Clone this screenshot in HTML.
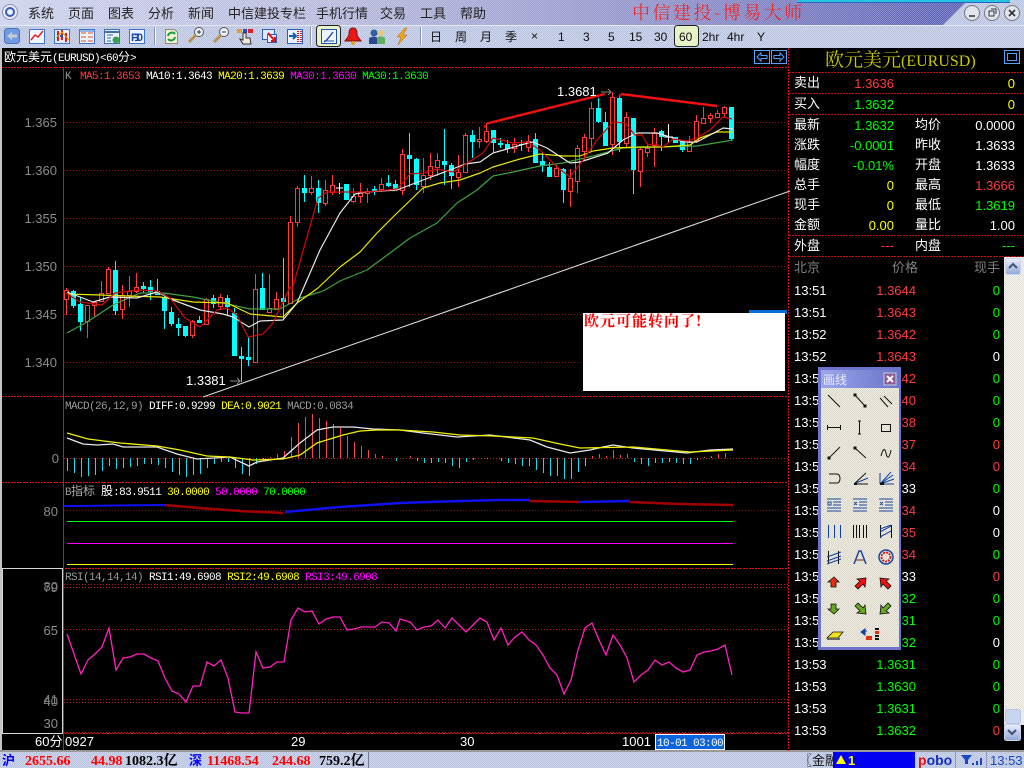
<!DOCTYPE html>
<html lang="zh"><head><meta charset="utf-8"><title>中信建投-博易大师</title>
<style>
html,body{margin:0;padding:0;background:#000;width:1024px;height:768px;overflow:hidden}
svg{display:block;position:absolute;left:0;top:0}
text{font-family:"Liberation Sans","WenQuanYi Zen Hei","Noto Sans CJK SC",sans-serif;font-size:13px;fill:#fff;dominant-baseline:auto}
.m{font-family:"Liberation Mono","WenQuanYi Zen Hei",monospace;font-size:11px;letter-spacing:-.6px}
.zh{font-size:12px;letter-spacing:0;font-family:"WenQuanYi Zen Hei","Noto Sans CJK SC",sans-serif}
.menu{fill:#222;font-size:13px}
.tb{fill:#111;font-size:12px}
.r{fill:#ff3c3c}.g{fill:#00ff00}.y{fill:#ffff00}.w{fill:#fff}.gy{fill:#999}.mg{fill:#ff00ff}
.e{text-anchor:end}
.b{font-family:"Liberation Serif","Noto Serif CJK SC",serif;font-weight:bold;font-size:14px}
.crisp path,.crisp rect,.crisp line{shape-rendering:crispEdges}
</style></head><body>
<svg width="1024" height="768" viewBox="0 0 1024 768" xmlns="http://www.w3.org/2000/svg">
<defs>
<linearGradient id="tg" x1="0" x2="1" y1="0" y2="0"><stop offset="0" stop-color="#cdd2ec"/><stop offset=".35" stop-color="#b6b9dc"/><stop offset=".7" stop-color="#8c8ec8"/><stop offset="1" stop-color="#5a60b4"/></linearGradient>
<pattern id="dt" width="2" height="2" patternUnits="userSpaceOnUse"><rect width="1" height="1" fill="#fff" opacity=".22"/><rect x="1" y="1" width="1" height="1" fill="#fff" opacity=".22"/></pattern>
<pattern id="dk" width="2" height="2" patternUnits="userSpaceOnUse"><rect width="1" height="1" fill="#000" opacity=".09"/><rect x="1" y="1" width="1" height="1" fill="#000" opacity=".09"/></pattern>
<linearGradient id="bt" x1="0" x2="0" y1="0" y2="1"><stop offset="0" stop-color="#eef" /><stop offset="1" stop-color="#8fa8d8"/></linearGradient>
<linearGradient id="fb" x1="0" x2="1" y1="0" y2="0"><stop offset="0" stop-color="#9aa6ec"/><stop offset="1" stop-color="#6a74c8"/></linearGradient>
</defs>

<!-- window chrome -->
<rect width="1024" height="48" fill="#cdd6f0"/>
<rect width="1024" height="48" fill="url(#dk)"/>
<polygon points="0,0 968,0 943,25 0,25" fill="url(#tg)"/>
<polygon points="0,0 968,0 943,25 0,25" fill="url(#dt)"/>
<rect x="797" y="0" width="213" height="2" fill="#22c6e0"/>
<rect x="797" y="2" width="213" height="1" fill="#3060c0"/>
<rect x="0" y="25" width="1024" height="1" fill="#e4e8f8"/>

<circle cx="10" cy="12" r="7.5" fill="#e8ecf8" stroke="#8a90b0"/><circle cx="10" cy="12" r="4" fill="none" stroke="#3a5cb8" stroke-width="2"/><circle cx="10" cy="12" r="1.2" fill="#fff"/>

<text class="menu" x="28" y="18">系统</text>
<text class="menu" x="68" y="18">页面</text>
<text class="menu" x="108" y="18">图表</text>
<text class="menu" x="148" y="18">分析</text>
<text class="menu" x="188" y="18">新闻</text>
<text class="menu" x="228" y="18">中信建投专栏</text>
<text class="menu" x="316" y="18">手机行情</text>
<text class="menu" x="380" y="18">交易</text>
<text class="menu" x="420" y="18">工具</text>
<text class="menu" x="460" y="18">帮助</text>
<text x="632" y="19" style="font-family:'Noto Serif CJK SC',serif;font-size:18px;letter-spacing:2.5px;fill:#f02828">中信建投-博易大师</text>

<g>
<circle cx="972" cy="13" r="7.5" fill="#dfe4ef" stroke="#777"/><path d="M969 16h6" stroke="#333" stroke-width="1.5"/>
<circle cx="992" cy="13" r="7.5" fill="#dfe4ef" stroke="#777"/><path d="M989 11h5v5h-5zM991 9h5v5" fill="none" stroke="#333"/>
<circle cx="1012" cy="13" r="7.5" fill="#dfe4ef" stroke="#777"/><path d="M1009 10l6 6M1015 10l-6 6" stroke="#333" stroke-width="1.6"/>
</g>

<!-- toolbar separators -->
<path d="M154.5 27V45M310.5 27V45M420.5 27V45" stroke="#8a92b0"/>
<path d="M155.5 27V45M311.5 27V45M421.5 27V45" stroke="#fff"/>
<rect x="316.5" y="25.5" width="24" height="21" rx="3" fill="#e8f2c8" stroke="#222"/>
<rect x="674.5" y="25.5" width="24" height="21" rx="3" fill="#e8f2c8" stroke="#222"/>

<!-- toolbar icons -->
<g>
<rect x="4.5" y="28.5" width="15" height="15" rx="3" fill="#6f9ce0" stroke="#4a70b8"/><path d="M7 36l5-4v2.500h5v3h-5V40z" fill="#c8ccd8"/>
<rect x="29.500" y="29.500" width="15" height="14" fill="#f2f6ff" stroke="#3c78c8"/><path d="M31 40l4-5 3 2 5-6" fill="none" stroke="#e02020" stroke-width="1.500"/>
<rect x="54.500" y="29.500" width="15" height="14" fill="#e4ecfc" stroke="#3c78c8"/><path d="M58 31v10M62 30v10M66 33v9" stroke="#d02020" stroke-width="2"/><path d="M56 38l6-6 7 8" fill="none" stroke="#e0a000"/><path d="M60 36h3" stroke="#2050c0" stroke-width="2"/>
<rect x="79.500" y="29.500" width="15" height="14" fill="#eef3ff" stroke="#3c78c8"/><path d="M81 33h5M88 33h5M81 37h5M88 37h5M81 41h5M88 41h5" stroke="#e05020"/><path d="M80 31h14" stroke="#3c78c8"/>
<rect x="104.500" y="29.500" width="15" height="14" fill="#eef3ff" stroke="#3c70b8"/><path d="M105 32h14" stroke="#3c70b8" stroke-width="2"/><path d="M107 35h6M107 38h4M107 41h4" stroke="#3060b0"/><circle cx="116" cy="40" r="3.500" fill="#38a050"/>
<rect x="129.500" y="29.500" width="15" height="14" fill="#eef3ff" stroke="#3c78c8"/><text x="131" y="41" style="font-size:11px;font-weight:bold;fill:#1848a8" textLength="12">F10</text>
<path d="M165.500 29.500h9l3 3v11h-12z" fill="#f4f0d8" stroke="#909070"/><path d="M168 36a4 4 0 0 1 7-2M175 37a4 4 0 0 1-7 2" fill="none" stroke="#18a038" stroke-width="2"/>
<circle cx="199" cy="32" r="4.500" fill="#eef2fc" stroke="#555"/><path d="M197 32h4M199 30v4" stroke="#333"/><path d="M196 35l-7 7" stroke="#b89050" stroke-width="3"/>
<circle cx="224" cy="32" r="4.500" fill="#eef2fc" stroke="#555"/><path d="M222 32h4" stroke="#333"/><path d="M221 35l-7 7" stroke="#b89050" stroke-width="3"/>
<rect x="237" y="29" width="5" height="4" fill="#e0a030"/><rect x="248" y="29" width="5" height="4" fill="#e02020"/><rect x="243" y="29" width="4" height="4" fill="#2050c0"/><path d="M243 33h3v5h4l1 6h-8l-3-5 3 1z" fill="#f4e8dc" stroke="#333"/>
<rect x="262.500" y="29.500" width="12" height="10" fill="#dfeaff" stroke="#3060b0"/><rect x="267.500" y="34.500" width="9" height="8" fill="#eef" stroke="#3060b0"/><path d="M268 33l7 8M275 37v4h-4" fill="none" stroke="#e01010" stroke-width="2"/>
<rect x="287.500" y="29.500" width="15" height="14" fill="#eef3ff" stroke="#3060b0"/><path d="M289 36h6M293 33l3 3-3 3" fill="none" stroke="#1060c0" stroke-width="2"/><path d="M298 31v12M301 31v12" stroke="#d82020" stroke-dasharray="1 1" stroke-width="2"/>
<rect x="321.500" y="29.500" width="15" height="14" fill="#f0f4ff" stroke="#2050a8"/><path d="M324 42c2-1 4-3 9-10" fill="none" stroke="#2050a8" stroke-width="1.500"/><path d="M324 41h10" stroke="#2050a8"/>
<path d="M353 28c-3 0-4 3-4 6 0 3-3 5-4 7h16c-1-2-4-4-4-7 0-3-1-6-4-6z" fill="#e81818" stroke="#801010"/><circle cx="353" cy="43" r="2" fill="#e8a020"/>
<circle cx="374" cy="33" r="3.500" fill="#3060a0"/><path d="M369 44v-5c0-3 9-3 9 0v5z" fill="#284890"/><circle cx="381" cy="33" r="3" fill="#e8c880"/><path d="M377 44v-6c0-2 8-2 8 0v6z" fill="#60b060"/>
<path d="M405 28l-8 9h4l-3 8 9-10h-4l4-7z" fill="#f0a818" stroke="#b06010" stroke-width=".5"/>
</g>

<!-- toolbar text -->
<g class="tb">
<text class="tb" x="430" y="41">日</text><text class="tb" x="455" y="41">周</text><text class="tb" x="480" y="41">月</text><text class="tb" x="505" y="41">季</text>
<text class="tb" x="531" y="40">×</text><text class="tb" x="558" y="41">1</text><text class="tb" x="583" y="41">3</text><text class="tb" x="608" y="41">5</text>
<text class="tb" x="629" y="41">15</text><text class="tb" x="654" y="41">30</text><text class="tb" x="679" y="41">60</text>
<text class="tb" x="702" y="41">2hr</text><text class="tb" x="727" y="41">4hr</text><text class="tb" x="757" y="41">Y</text>
</g>

<!-- body -->
<rect x="0" y="48" width="1024" height="703" fill="#000"/>
<rect x="0" y="48" width="2" height="703" fill="#c4c4c4"/>
<rect x="0" y="750" width="1024" height="2" fill="#9a9a9a"/>

<!-- panel grid -->
<g class="crisp" fill="none">
<path d="M2 67.500H788M2 396.500H788M2 482.500H788M2 568.500H788M2 733.500H788" stroke="#e01010" stroke-dasharray="2 1"/>
<path d="M63.500 67V750" stroke="#e01010"/>
<path d="M788.500 48V751" stroke="#d01010" stroke-dasharray="2 1"/>
<path d="M64 122.500H788M64 170.500H788M64 218.500H788M64 266.500H788M64 314.500H788M64 362.500H788" stroke="#a01010" stroke-dasharray="1 2"/>
<path d="M64 458.500H788" stroke="#c01818" stroke-dasharray="1 2"/>
<path d="M64 510.500H788" stroke="#801010" stroke-dasharray="1 2"/>
<path d="M64 584.500H788M64 587.500H788M64 629.500H788M64 699.500H788M64 702.500H788M64 732.500H788" stroke="#c01818" stroke-dasharray="1 2"/>
<rect x="2.500" y="568.500" width="60" height="165" stroke="#d8d8d8"/>
</g>

<text x="4" y="61" class="zh" style="fill:#fff">欧元美元<tspan class="m">(EURUSD)&lt;60</tspan>分<tspan class="m">&gt;</tspan></text>
<g fill="none" stroke="#55a0ff"><rect x="754.500" y="50.500" width="15" height="13"/><rect x="771.500" y="50.500" width="15" height="13"/><rect x="1004.500" y="50.500" width="15" height="13"/><rect x="1007.500" y="53.500" width="9" height="7"/>
<path d="M757 57l4-4v2.500h6v3h-6V61z"/><path d="M784 57l-4-4v2.500h-6v3h6V61z"/></g>

<text class="m gy" x="65" y="79">K</text>
<text class="m" x="80" y="79"><tspan class="r">MA5:1.3653</tspan> <tspan class="w">MA10:1.3643</tspan> <tspan class="y">MA20:1.3639</tspan> <tspan class="mg">MA30:1.3630</tspan> <tspan class="g">MA30:1.3630</tspan></text>

<g>
<text class="e" style="fill:#8c8c8c" x="57" y="127">1.365</text>
<text class="e" style="fill:#8c8c8c" x="57" y="175">1.360</text>
<text class="e" style="fill:#8c8c8c" x="57" y="223">1.355</text>
<text class="e" style="fill:#8c8c8c" x="57" y="271">1.350</text>
<text class="e" style="fill:#8c8c8c" x="57" y="319">1.345</text>
<text class="e" style="fill:#8c8c8c" x="57" y="367">1.340</text>
</g>

<!-- candles -->
<g class="crisp">
<path stroke="#ff3c3c" fill="none" d="M66.500 288V315M87.500 305V338M94.500 301V317M101.500 281V302M108.500 267V293M122.500 285V319M129.500 276V307M136.500 273V293M192.500 320V338M206.500 298V325M220.500 294V310M255.500 274V362M269.500 274V312M276.500 292V309M290.500 216V303M297.500 186V227M311.500 176V195M325.500 180V206M332.500 175V195M353.500 188V203M360.500 183V203M367.500 188V203M381.500 178V192M402.500 149V195M423.500 158V193M430.500 153V180M437.500 153V176M458.500 155V187M465.500 133V173M479.500 127V148M486.500 123V143M514.500 138V153M528.500 135V152M556.500 165V176M570.500 169V207M577.500 145V193M584.500 134V160M591.500 102V152M612.500 92V155M626.500 112V147M640.500 148V187M647.500 143V157M654.500 128V167M689.500 136V152M696.500 115V142M703.500 107V123M710.500 113V123M717.500 110V117M724.500 106V118"/>
<path stroke="#ff3c3c" fill="#000" d="M64.500 290.500h4v9h-4zM85.500 305.500h4v16h-4zM92.500 302.500h4v3h-4zM99.500 293.500h4v8h-4zM106.500 269.500h4v24h-4zM120.500 295.500h4v14h-4zM127.500 291.500h4v4h-4zM134.500 287.500h4v4h-4zM190.500 321.500h4v14h-4zM204.500 299.500h4v25h-4zM218.500 297.500h4v9h-4zM253.500 289.500h4v73h-4zM267.500 308.500h4v4h-4zM274.500 299.500h4v10h-4zM288.500 222.500h4v81h-4zM295.500 188.500h4v34h-4zM309.500 188.500h4v4h-4zM323.500 190.500h4v13h-4zM330.500 185.500h4v7h-4zM351.500 196.500h4v5h-4zM358.500 192.500h4v4h-4zM365.500 191.500h4v2h-4zM379.500 184.500h4v5h-4zM400.500 154.500h4v36h-4zM421.500 175.500h4v11h-4zM428.500 166.500h4v9h-4zM435.500 160.500h4v7h-4zM456.500 172.500h4v5h-4zM463.500 135.500h4v37h-4zM477.500 139.500h4v2h-4zM484.500 131.500h4v10h-4zM512.500 144.500h4v4h-4zM526.500 141.500h4v6h-4zM554.500 168.500h4v8h-4zM568.500 178.500h4v13h-4zM575.500 148.500h4v33h-4zM582.500 137.500h4v14h-4zM589.500 108.500h4v30h-4zM610.500 97.500h4v47h-4zM624.500 117.500h4v26h-4zM638.500 149.500h4v22h-4zM645.500 148.500h4v4h-4zM652.500 133.500h4v12h-4zM687.500 142.500h4v9h-4zM694.500 121.500h4v19h-4zM701.500 118.500h4v5h-4zM708.500 115.500h4v3h-4zM715.500 113.500h4v4h-4zM722.500 107.500h4v6h-4z"/>
<path stroke="#00ffff" fill="none" d="M73.500 290V308M80.500 297V331M115.500 261V315M143.500 282V293M150.500 280V300M157.500 279V295M164.500 293V329M171.500 307V326M178.500 318V336M185.500 326V337M199.500 316V323M213.500 295V308M227.500 295V316M234.500 308V356M241.500 347V382M248.500 337V366M262.500 273V310M283.500 258V320M304.500 175V202M318.500 180V213M346.500 184V200M374.500 186V195M388.500 175V187M395.500 180V190M409.500 133V187M416.500 158V190M444.500 129V185M451.500 163V189M472.500 130V158M493.500 130V152M500.500 138V148M507.500 140V153M521.500 140V151M535.500 133V163M542.500 152V172M549.500 162V177M563.500 168V203M598.500 98V123M605.500 112V146M619.500 95V152M633.500 118V194M661.500 130V151M675.500 137V143M682.500 140V152M731.500 107V140"/>
<path fill="#00ffff" d="M71 291h5v15h-5zM78 304h5v18h-5zM113 270h5v41h-5zM141 286h5v3h-5zM148 287h5v5h-5zM155 291h5v4h-5zM162 297h5v14h-5zM169 312h5v12h-5zM176 324h5v4h-5zM183 326h5v10h-5zM197 320h5v3h-5zM211 298h5v6h-5zM225 298h5v9h-5zM232 313h5v43h-5zM239 356h5v3h-5zM246 357h5v3h-5zM260 288h5v22h-5zM281 298h5v4h-5zM302 188h5v5h-5zM316 188h5v15h-5zM344 184h5v16h-5zM372 189h5v3h-5zM386 183h5v3h-5zM393 184h5v5h-5zM407 155h5v4h-5zM414 159h5v26h-5zM442 161h5v4h-5zM449 165h5v11h-5zM470 135h5v7h-5zM491 130h5v13h-5zM498 143h5v2h-5zM505 144h5v5h-5zM519 144h5v1h-5zM533 139h5v24h-5zM540 161h5v5h-5zM547 167h5v10h-5zM561 169h5v21h-5zM596 108h5v14h-5zM603 122h5v24h-5zM617 98h5v44h-5zM631 118h5v52h-5zM659 131h5v6h-5zM673 137h5v6h-5zM680 141h5v9h-5zM729 107h5v32h-5z"/>
<path stroke="#fff" fill="none" d="M339.500 183V194M336 188H343M668.500 124V142M664 137H673"/>
</g>

<!-- MAs -->
<g fill="none" stroke-linejoin="round">
<polyline stroke="#3fa33f" stroke-width="1.200" points="67,333 87,322 113,305 140,293 163,293 193,297 223,303 250,309 280,309 300,298 320,292 325,290 340,281 367,270 390,253 410,238 437,223 457,203 477,190 493,176 513,172 540,166 563,163 593,156 623,148 657,147 697,146 733,140"/>
<polyline stroke="#e8e800" stroke-width="1.200" points="67,294 100,295 127,296 160,297 193,302 227,303 250,314 283,317 297,303 318,288 340,267 360,252 377,233 395,215 423,188 440,183 460,180 480,173 493,167 520,159 540,154 563,156 580,156 593,151 613,148 640,147 663,147 690,145 700,138 717,132 733,132"/>
<polyline stroke="#e8e8e8" stroke-width="1.200" points="67,292 93,302 110,297 137,298 157,292 173,300 200,310 223,314 233,317 249,327 260,321 283,320 297,303 320,250 340,213 355,194 367,192 397,190 423,180 450,170 465,164 480,162 493,153 507,149 528,143 533,142 547,148 570,163 580,162 608,153 623,140 637,133 657,133 670,137 683,142 697,142 710,135 723,128 733,129"/>
<polyline stroke="#d00808" stroke-width="1.200" points="66,293 80,302 102,305 115,293 137,290 157,291 170,298 185,318 200,327 217,310 227,308 237,315 248,337 263,334 273,323 290,287 292,290 318,198 327,192 338,192 367,192 397,189 410,174 423,173 437,169 453,172 472,160 483,153 493,138 513,143 528,142 540,150 557,167 570,177 583,160 597,140 613,122 625,123 635,135 642,135 648,145 655,144 663,147 673,139 687,141 697,138 710,130 723,117 732,119"/>
<path d="M203 397L790 191" stroke="#d8d8d8" stroke-width="1.100"/>
<path d="M487 123.500L605 94M621 94L717 106" stroke="#f01010" stroke-width="2.400"/>
<path d="M485 125v3M620 94v3" stroke="#f01010" stroke-width="1.500"/>
</g>
<text x="557" y="96" class="w">1.3681</text>
<path d="M601 92H611M608 89l3 3-3 3" stroke="#888" fill="none"/>
<text x="186" y="385" class="w">1.3381</text>
<path d="M230 381H240M237 378l3 3-3 3" stroke="#888" fill="none"/>

<!-- note -->
<rect x="749" y="310" width="38" height="4" fill="#0a6ad8"/>
<rect x="583" y="313" width="202" height="78" fill="#fff"/>
<text x="584" y="326" style="font-family:'Noto Serif CJK SC',serif;font-weight:bold;font-size:15px;letter-spacing:1px;fill:#ff0000">欧元可能转向了!</text>

<!-- MACD -->
<text class="m" x="65" y="409"><tspan class="gy">MACD(26,12,9)</tspan> <tspan class="w">DIFF:0.9299</tspan> <tspan class="y">DEA:0.9021</tspan> <tspan class="gy">MACD:0.0834</tspan></text>
<text class="e" style="fill:#8c8c8c" x="59" y="463">0</text>
<g class="crisp">
<path stroke="#22d8e8" d="M67.500 458V471M74.500 458V473M81.500 458V477M88.500 458V476M95.500 458V475M102.500 458V471M109.500 458V466M116.500 458V469M123.500 458V468M130.500 458V467M137.500 458V466M144.500 458V464M151.500 458V464M158.500 458V465M165.500 458V468M172.500 458V472M179.500 458V475M186.500 458V477M193.500 458V475M200.500 458V474M207.500 458V468M214.500 458V464M221.500 458V462M228.500 458V462M235.500 458V468M242.500 458V474M249.500 458V476M256.500 458V464M263.500 458V460M396.500 458V461M417.500 458V461M424.500 458V463M431.500 458V463M438.500 458V462M445.500 458V463M452.500 458V466M459.500 458V468M466.500 458V462M473.500 458V460M487.500 458V459M501.500 458V461M508.500 458V463M515.500 458V464M522.500 458V466M529.500 458V466M536.500 458V470M543.500 458V473M550.500 458V476M557.500 458V476M564.500 458V479M571.500 458V479M578.500 458V472M585.500 458V466M634.500 458V462M641.500 458V464M648.500 458V466M655.500 458V463M662.500 458V463M669.500 458V462M676.500 458V463M683.500 458V464M690.500 458V464M697.500 458V460"/>
<path stroke="#f04848" d="M270.500 458V457M277.500 458V454M284.500 458V451M291.500 458V437M298.500 458V423M305.500 458V417M312.500 458V414M319.500 458V418M326.500 458V421M333.500 458V424M340.500 458V428M347.500 458V436M354.500 458V442M361.500 458V446M368.500 458V450M375.500 458V454M382.500 458V456M410.500 458V456M592.500 458V456M599.500 458V454M606.500 458V456M613.500 458V450M620.500 458V455M627.500 458V454M704.500 458V457M711.500 458V456M718.500 458V454M725.500 458V453"/>
</g>
<g fill="none">
<polyline stroke="#e8e8e8" stroke-width="1.300" points="67,438 83,444 97,445 113,444 123,447 157,447 177,454 197,459 230,457 249,466 257,462 283,458 300,443 317,430 333,427 353,427 373,429 400,430 423,433 457,437 490,435 530,440 547,447 570,453 590,450 603,447 613,445 633,448 687,453 710,450 733,449"/>
<polyline stroke="#f0f000" stroke-width="1.300" points="67,433 88,439 120,443 157,446 180,450 207,456 230,457 253,460 283,459 300,455 317,443 343,435 360,431 377,430 400,430 433,432 460,435 493,436 533,438 560,444 580,448 633,447 667,450 690,452 733,450"/>
</g>

<!-- B panel -->
<text class="m" x="65" y="495"><tspan class="gy">B</tspan><tspan class="zh" style="fill:#aaa">指标</tspan> <tspan class="zh" style="fill:#fff">股</tspan><tspan class="w">:83.9511</tspan> <tspan class="y">30.0000</tspan> <tspan class="mg">50.0000</tspan> <tspan class="g">70.0000</tspan></text>
<text class="e" style="fill:#8c8c8c" x="58" y="516">80</text>
<g fill="none" class="crisp">
<path stroke="#00ff00" d="M67 521.500H733"/><path stroke="#ff00ff" d="M67 543.500H733"/><path stroke="#ffff00" d="M67 564.500H733"/>
</g>
<g fill="none" stroke-width="2.500">
<polyline stroke="#1010f0" stroke-width="2" points="64,506 77,506 165,505"/>
<polyline stroke="#a00000" points="165,505 200,508 240,511 283,513"/>
<polyline stroke="#1010f0" points="285,512 340,507 400,503 460,501 500,500 530,500"/>
<polyline stroke="#a00000" points="530,501 580,502"/>
<polyline stroke="#1010f0" points="580,502 630,501"/>
<polyline stroke="#a00000" points="630,502 680,504 733,505"/>
</g>

<!-- RSI -->
<text class="m" x="65" y="580"><tspan class="gy">RSI(14,14,14)</tspan> <tspan class="w">RSI1:49.6908</tspan> <tspan class="y">RSI2:49.6908</tspan> <tspan class="mg">RSI3:49.6908</tspan></text>
<g>
<text class="e" style="fill:#808080" x="58" y="591">80</text><text class="e" style="fill:#808080" x="58" y="592">79</text>
<text class="e" style="fill:#8c8c8c" x="58" y="635">65</text>
<text class="e" style="fill:#808080" x="58" y="704">41</text><text class="e" style="fill:#808080" x="58" y="706">40</text>
<text class="e" style="fill:#8c8c8c" x="58" y="728">30</text>
</g>
<polyline fill="none" stroke="#ff20c0" stroke-width="1.300" points="67,634 81,674 88,660 95,654 102,647 109,628 116,670 123,658 130,657 137,654 144,654 151,658 158,661 165,678 172,691 179,694 186,702 193,686 200,686 207,662 214,666 221,660 228,678 235,712 242,713 249,713 256,652 263,668 270,667 277,662 284,662 291,620 298,608 305,612 312,611 319,624 326,619 333,617 340,617 347,630 354,629 361,627 368,627 375,627 382,622 389,623 396,631 400,619 410,622 417,630 424,627 431,626 438,620 445,628 452,618 459,625 466,632 473,625 480,618 487,622 494,640 501,628 508,645 515,637 522,632 529,640 536,645 543,655 550,668 557,675 564,694 571,680 578,650 585,628 592,623 599,640 606,655 613,635 620,645 627,658 634,682 641,675 648,670 655,660 662,665 669,662 676,668 683,672 690,670 697,655 704,652 711,651 718,649 725,645 732,675"/>

<!-- x axis -->
<text x="35" y="746" class="w">60分</text>
<text x="65" y="746" class="w">0927</text>
<text x="291" y="746" class="w">29</text>
<text x="460" y="746" class="w">30</text>
<text x="622" y="746" class="w">1001</text>
<rect x="655.500" y="734.500" width="69" height="15" fill="#0c64dc" stroke="#fff"/>
<text x="657" y="746" class="m w">10-01 03:00</text>

<!-- right panel -->
<g class="crisp"><path stroke="#c01010" stroke-dasharray="2 1" d="M789 72.500H1024M789 93.500H1024M789 114.500H1024M789 235.500H1024M789 256.500H1024"/></g>
<rect x="1004.500" y="50.500" width="15" height="13" fill="#000" stroke="#55a0ff"/><rect x="1007.500" y="53.500" width="9" height="7" fill="none" stroke="#55a0ff"/>
<text x="825" y="66" style="font-family:'Noto Serif CJK SC',serif;font-size:19px;fill:#c8c800">欧元美元<tspan style="font-family:'Liberation Serif',serif;font-size:16px">(EURUSD)</tspan></text>

<text x="794" y="87">卖出</text><text class="e r" x="894" y="88">1.3636</text><text class="e y" x="1015" y="88">0</text>
<text x="794" y="108">买入</text><text class="e g" x="894" y="109">1.3632</text><text class="e y" x="1015" y="109">0</text>
<text x="794" y="129">最新</text><text class="e g" x="894" y="130">1.3632</text><text x="915" y="129">均价</text><text class="e" x="1015" y="130">0.0000</text>
<text x="794" y="149">涨跌</text><text class="e g" x="894" y="150">-0.0001</text><text x="915" y="149">昨收</text><text class="e" x="1015" y="150">1.3633</text>
<text x="794" y="169">幅度</text><text class="e g" x="894" y="170">-0.01%</text><text x="915" y="169">开盘</text><text class="e" x="1015" y="170">1.3633</text>
<text x="794" y="189">总手</text><text class="e y" x="894" y="190">0</text><text x="915" y="189">最高</text><text class="e r" x="1015" y="190">1.3666</text>
<text x="794" y="209">现手</text><text class="e y" x="894" y="210">0</text><text x="915" y="209">最低</text><text class="e g" x="1015" y="210">1.3619</text>
<text x="794" y="229">金额</text><text class="e y" x="894" y="230">0.00</text><text x="915" y="229">量比</text><text class="e" x="1015" y="230">1.00</text>
<text x="794" y="250">外盘</text><text class="e r" x="894" y="250">---</text><text x="915" y="250">内盘</text><text class="e g" x="1015" y="250">---</text>

<text x="794" y="272" style="fill:#808080">北京</text><text x="892" y="272" style="fill:#808080">价格</text><text x="974" y="272" style="fill:#808080">现手</text>

<g>
<text x="794" y="295">13:51</text><text class="e r" x="916" y="295">1.3644</text><text class="e g" x="1000" y="295">0</text>
<text x="794" y="317">13:51</text><text class="e r" x="916" y="317">1.3643</text><text class="e g" x="1000" y="317">0</text>
<text x="794" y="339">13:52</text><text class="e r" x="916" y="339">1.3642</text><text class="e g" x="1000" y="339">0</text>
<text x="794" y="361">13:52</text><text class="e r" x="916" y="361">1.3643</text><text class="e w" x="1000" y="361">0</text>
<text x="794" y="383">13:52</text><text class="e r" x="916" y="383">1.3642</text><text class="e g" x="1000" y="383">0</text>
<text x="794" y="405">13:52</text><text class="e r" x="916" y="405">1.3640</text><text class="e g" x="1000" y="405">0</text>
<text x="794" y="427">13:52</text><text class="e r" x="916" y="427">1.3638</text><text class="e g" x="1000" y="427">0</text>
<text x="794" y="449">13:52</text><text class="e r" x="916" y="449">1.3637</text><text class="e r" x="1000" y="449">0</text>
<text x="794" y="471">13:52</text><text class="e r" x="916" y="471">1.3634</text><text class="e r" x="1000" y="471">0</text>
<text x="794" y="493">13:52</text><text class="e w" x="916" y="493">1.3633</text><text class="e g" x="1000" y="493">0</text>
<text x="794" y="515">13:52</text><text class="e r" x="916" y="515">1.3634</text><text class="e w" x="1000" y="515">0</text>
<text x="794" y="537">13:52</text><text class="e r" x="916" y="537">1.3635</text><text class="e w" x="1000" y="537">0</text>
<text x="794" y="559">13:52</text><text class="e r" x="916" y="559">1.3634</text><text class="e g" x="1000" y="559">0</text>
<text x="794" y="581">13:52</text><text class="e w" x="916" y="581">1.3633</text><text class="e r" x="1000" y="581">0</text>
<text x="794" y="603">13:52</text><text class="e g" x="916" y="603">1.3632</text><text class="e g" x="1000" y="603">0</text>
<text x="794" y="625">13:52</text><text class="e g" x="916" y="625">1.3631</text><text class="e g" x="1000" y="625">0</text>
<text x="794" y="647">13:52</text><text class="e g" x="916" y="647">1.3632</text><text class="e w" x="1000" y="647">0</text>
<text x="794" y="669">13:53</text><text class="e g" x="916" y="669">1.3631</text><text class="e g" x="1000" y="669">0</text>
<text x="794" y="691">13:53</text><text class="e g" x="916" y="691">1.3630</text><text class="e g" x="1000" y="691">0</text>
<text x="794" y="713">13:53</text><text class="e g" x="916" y="713">1.3631</text><text class="e g" x="1000" y="713">0</text>
<text x="794" y="735">13:53</text><text class="e g" x="916" y="735">1.3632</text><text class="e r" x="1000" y="735">0</text>
</g>

<!-- scrollbar -->
<rect x="1004" y="257" width="20" height="468" fill="#f6f6ee"/>
<rect x="1004" y="257" width="20" height="468" fill="url(#dk)"/>
<rect x="1005.500" y="258.500" width="15" height="16" rx="2" fill="url(#bt)" stroke="#c8d4ec"/>
<path d="M1009 268l4-4 4 4" fill="none" stroke="#405070" stroke-width="2"/>
<rect x="1005.500" y="709.500" width="15" height="14" rx="2" fill="#c8d4f0" stroke="#b8c4e0"/>
<rect x="1004.500" y="724.500" width="16" height="16" rx="2" fill="url(#bt)" stroke="#c8d4ec"/>
<path d="M1008 730l4 4 4-4" fill="none" stroke="#405070" stroke-width="2"/>

<!-- floating drawing toolbar -->
<rect x="818" y="367" width="83" height="283" fill="#6c74cc"/>
<rect x="821" y="370" width="78" height="18" fill="url(#fb)"/>
<rect x="821" y="388" width="78" height="259" fill="#f0ece0"/>
<rect x="821" y="388" width="78" height="259" fill="url(#dk)"/>
<text x="823" y="384" style="font-size:12px;fill:#e8ecff">画线</text>
<rect x="884" y="373" width="12" height="12" fill="#8c5c94" stroke="#c8c8e8"/>
<path d="M887 376l6 6M893 376l-6 6" stroke="#fff" stroke-width="2"/>
<g fill="none" stroke="#111">
<path d="M828 395l12 12"/>
<path d="M855 395l10 11"/><path d="M854 394h2v2h-2zM864 405h2v2h-2z" fill="#111"/>
<path d="M880 398l8 9M884 396l8 8"/>
<path d="M827 427.500h14M827.500 425v5M840.500 425v5"/>
<path d="M859.500 421v13M858 421h3M858 434h3"/>
<rect x="881.500" y="424.500" width="9" height="7"/>
<path d="M829 458l11-11"/><path d="M828 457h2v2h-2z" fill="#111"/>
<path d="M855 448l11 10"/><path d="M854 447h2v2h-2z" fill="#111"/>
<path d="M881 456c2-8 4-8 5-3s3 7 5-3"/>
<path d="M829 474h8c4 0 4 9 0 9h-8"/>
<path d="M854 484h14M854 484l12-11"/><path d="M856 483l12-5" stroke="#1040a0"/><path d="M854 484h3" stroke-width="2"/>
<path d="M880 484v-11M880 484h14M880 484l11-12M880 484l13-9M880 484l14-5" stroke="#1040a0"/><path d="M880 484h3v-2" stroke-width="2"/>
<g stroke="#1848a0"><path d="M827 499h14M833 502h8M833 505h8M827 508h14M827 511h14"/><path d="M853 499h14M859 502h8M859 505h8M853 508h14M853 511h14"/><path d="M879 499h14M885 502h8M885 505h8M879 508h14M879 511h14"/></g>
<path d="M854 502l3 3M857 502l-3 3M880 502l3 3M883 502l-3 3M828 502h3v3h-3z" stroke="#1848a0"/>
<path d="M828.500 525v13M834.500 525v13M840.500 525v13" stroke="#1040a0"/>
<path d="M853.500 525v13M856.500 525v13M859.500 525v13M863.500 525v13M866.500 525v13" stroke="#111"/>
<path d="M880.500 525v13M891.500 525v13" stroke="#111"/><path d="M880 532l11-6M880 537l11-6M880 529l11-4" stroke="#1040a0"/>
<path d="M828.500 551v13M838.500 551v13" stroke="#111"/><path d="M827 561l14-5M827 557l14-5M827 564l14-5" stroke="#1040a0"/>
<path d="M854 564l5-13h2l5 13M856 560h8" stroke="#1848a0" stroke-width="1.500"/><path d="M856 560h8" stroke="#e07020"/>
<circle cx="886" cy="557" r="7" stroke="#1848a0" stroke-width="1.500"/><circle cx="886" cy="557" r="4.500" stroke="#d02020" stroke-width="2" stroke-dasharray="2 1"/>
</g>
<!-- arrows -->
<g stroke="#111" stroke-width=".8">
<path d="M834 577l5 5h-3v5h-5v-5h-3z" fill="#e83010"/>
<path d="M866 578l-1 9-2-3-5 5-3-3 5-5-3-2z" fill="#f01010"/>
<path d="M880 578l9 1-3 2 5 5-3 3-5-5-2 3z" fill="#f01010"/>
<path d="M834 614l5-5h-3v-5h-5v5h-3z" fill="#68a820"/>
<path d="M866 614l-1-9-2 3-5-5-3 3 5 5-3 2z" fill="#68a820"/>
<path d="M880 614l1-9 2 3 5-5 3 3-5 5 3 2z" fill="#68a820"/>
<path d="M827 638l6-6h10l-5 6z" fill="#f0e020"/>
</g>
<path d="M827 638h13v2h-13z" fill="#666"/>
<path d="M867 631h-5M865 629l-4 3 4 3v-6z" stroke="#1040a0" fill="#1040a0"/>
<path d="M866 636h6v4h-6z" fill="#e03010"/>
<path d="M875 628h4v2h-4z" fill="#111"/><path d="M875 631h4v3h-4z" fill="#e03010"/><path d="M875 635h4v2h-4zM875 638h4v2h-4z" fill="#111"/>

<!-- status bar -->
<rect x="0" y="752" width="1024" height="16" fill="#cdd6f0"/>
<rect x="0" y="752" width="1024" height="16" fill="url(#dk)"/>
<path d="M368.500 752V768" stroke="#707890"/>
<text x="2" y="765" style="font-weight:bold;fill:#0000ff">沪</text>
<text x="25" y="765" class="b" style="fill:#ff0000">2655.66</text>
<text x="91" y="765" class="b" style="fill:#ff0000">44.98</text>
<text x="125" y="765" class="b" style="fill:#000">1082.3亿</text>
<text x="189" y="765" style="font-weight:bold;fill:#0000ff">深</text>
<text x="207" y="765" class="b" style="fill:#ff0000">11468.54</text>
<text x="272" y="765" class="b" style="fill:#ff0000">244.68</text>
<text x="319" y="765" class="b" style="fill:#000">759.2亿</text>
<text x="799" y="765" style="fill:#111">〖金融</text>
<rect x="833" y="752" width="82" height="16" fill="#0000f0"/>
<path d="M836 764l5-9 5 9z" fill="#ffff00"/>
<text x="848" y="765" style="font-weight:bold;fill:#ffff00">1</text>
<text x="918" y="765" style="font-weight:bold;font-size:14px;fill:#1030c0"><tspan style="fill:#f01010">p</tspan>obo</text>
<path d="M955.500 752V768M986.500 752V768" stroke="#9098b8"/>
<path d="M961 755h11l-4 5v4h-3v-4z" fill="#1848c0"/>
<path d="M972 763h2v2h-2zM976 761h2v4h-2zM980 758h2v7h-2z" fill="#1848c0"/>
<text x="990" y="765" style="fill:#1848c0">13:53</text>
</svg>
</body></html>
